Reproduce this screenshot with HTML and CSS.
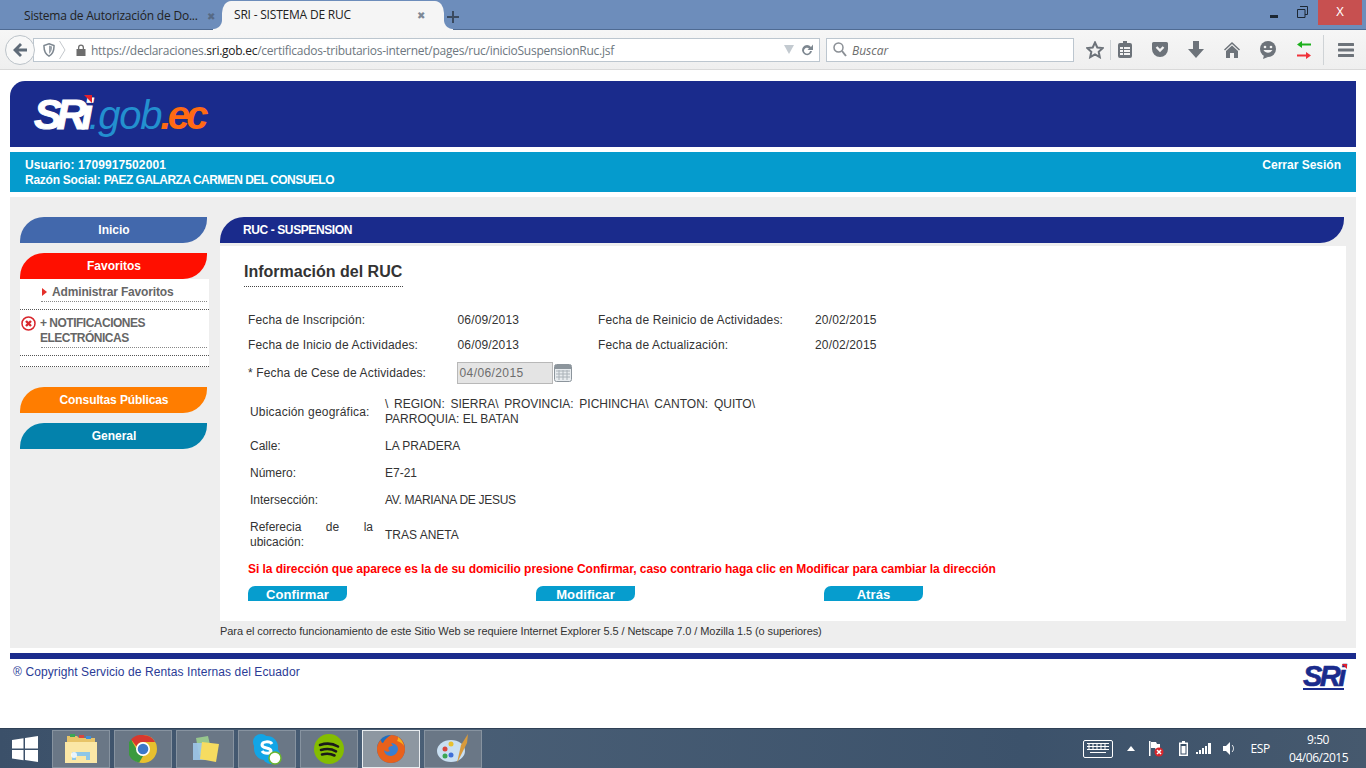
FILE: index.html
```html
<!DOCTYPE html>
<html lang="es">
<head>
<meta charset="utf-8">
<title>SRI - SISTEMA DE RUC</title>
<link rel="stylesheet" href="styles.css">
</head>
<body>
<div class="app">
  <header class="titlebar">
    <div class="tab"><span class="tab-label">Sistema de Autorización de Do...</span><span class="tab-x">✖</span></div>
    <div class="tab active"><span class="tab-label">SRI - SISTEMA DE RUC</span><span class="tab-x">✖</span></div>
    <svg class="newtab" width="12" height="12" viewBox="0 0 12 12"><path d="M5 0h2v5h5v2H7v5H5V7H0V5h5z" fill="#3a4a60"/></svg>
    <div class="winctl">
      <svg class="win-min" width="10" height="3" viewBox="0 0 10 3"><rect width="8" height="3" y="0" fill="#1c2733"/></svg>
      <svg class="win-max" width="11" height="12" viewBox="0 0 11 12"><path d="M3 .5h7.500v8H8M.5 3.500h7.500v8H.5z" fill="none" stroke="#1c2733"/></svg>
      <div class="win-close">X</div>
    </div>
  </header>
  <nav class="toolbar">
    <div class="backbtn"><svg width="16" height="16" viewBox="0 0 16 16"><path d="M8 1 1 8l7 7 2-2-3.500-3.500H15v-3H6.500L10 3z" fill="#5f6b78"/></svg></div>
    <div class="urlbar">
      <svg class="shield" width="12" height="14" viewBox="0 0 12 14"><path d="M6 .8 11 2.500c.2 5-1.500 8.800-5 10.700C2.500 11.300.8 7.500 1 2.500z" fill="none" stroke="#7d8790" stroke-width="1.500"/><path d="M6 2.500 9 3.600c.1 3.500-1 6-3 7.300z" fill="#9aa2aa"/></svg>
      <svg class="chev" width="7" height="20" viewBox="0 0 7 20"><path d="M.5 1 6 10 .5 19" fill="none" stroke="#c4c8cc"/></svg>
      <svg class="lock" width="10" height="12" viewBox="0 0 10 12"><path d="M2 5V3.500a3 3 0 0 1 6 0V5h1.500v7H.5V5zm1.300 0h3.400V3.500a1.700 1.700 0 0 0-3.400 0z" fill="#6d6d6d"/></svg>
      <span class="url">https://declaraciones.<b>sri.gob.ec</b>/certificados-tributarios-internet/pages/ruc/inicioSuspensionRuc.jsf</span>
      <svg class="drop" width="10" height="9" viewBox="0 0 10 9"><path d="M0 0h10L5 9z" fill="#c3cad0"/></svg>
      <svg class="reload" width="12" height="14" viewBox="0 0 12 14"><path d="M10 4A5 5 0 1 0 11 8H9A3 3 0 1 1 8 5.400L6.500 7H12V1.500z" fill="#7d8790"/></svg>
    </div>
    <div class="searchbar">
      <svg width="14" height="15" viewBox="0 0 14 15"><circle cx="5.500" cy="5.500" r="4.500" fill="none" stroke="#8a8f95" stroke-width="1.500"/><path d="m9 9 4 5" stroke="#8a8f95" stroke-width="2"/></svg>
      <span class="search-ph">Buscar</span>
    </div>
    <div class="tools">
      <svg class="t-star" width="18" height="18" viewBox="0 0 18 18"><path d="m9 1.500 2.300 5 5.400.6-4 3.700 1.100 5.400L9 13.500l-4.800 2.700 1.100-5.400-4-3.700 5.400-.6z" fill="none" stroke="#6d737a" stroke-width="2"/></svg>
      <i class="t-sep"></i>
      <svg class="t-clip" width="14" height="17" viewBox="0 0 14 17"><path d="M5 0h4v2h3a2 2 0 0 1 2 2v11a2 2 0 0 1-2 2H2a2 2 0 0 1-2-2V4a2 2 0 0 1 2-2h3z" fill="#6d737a"/><path d="M2 6h3v2H2zm4 0h6v2H6zm-4 3h3v2H2zm4 0h6v2H6zm-4 3h3v2H2zm4 0h6v2H6z" fill="#f4f4f4"/></svg>
      <svg class="t-pocket" width="16" height="15" viewBox="0 0 16 15"><path d="M1.500 0h13A1.500 1.500 0 0 1 16 1.500V7a8 8 0 0 1-16 0V1.500A1.500 1.500 0 0 1 1.500 0z" fill="#6d737a"/><path d="m4.500 5 3.500 3.500L11.500 5" fill="none" stroke="#f4f4f4" stroke-width="2.400"/></svg>
      <svg class="t-down" width="16" height="17" viewBox="0 0 16 17"><path d="M5 0h6v8h5l-8 9-8-9h5z" fill="#6d737a"/></svg>
      <svg class="t-home" width="16" height="16" viewBox="0 0 16 16"><path d="m8 0 8 7.500-1 1L8 2 1 8.500l-1-1z" fill="#6d737a"/><path d="M8 3.500 14 9v7h-4v-5H6v5H2V9z" fill="#6d737a"/></svg>
      <svg class="t-smile" width="18" height="18" viewBox="0 0 18 18"><circle cx="9" cy="8" r="8" fill="#6d737a"/><path d="M5 14 4 18l5-2z" fill="#6d737a"/><circle cx="6" cy="6" r="1.300" fill="#f4f4f4"/><circle cx="12" cy="6" r="1.300" fill="#f4f4f4"/><path d="M4.500 9c2 3.500 7 3.500 9 0z" fill="#f4f4f4"/></svg>
      <svg class="t-arrows" width="14" height="18" viewBox="0 0 14 18"><path d="M0 3.500 5 0v2.500h9v2H5V7z" fill="#1cb01c"/><path d="M14 14.500 9 11v2.500H0v2h9V18z" fill="#f0323a"/></svg>
      <i class="t-sep2"></i>
      <svg class="t-menu" width="16" height="14" viewBox="0 0 16 14"><path d="M1 0h14a1 1 0 0 1 0 3H1a1 1 0 0 1 0-3zm0 5.500h14a1 1 0 0 1 0 3H1a1 1 0 0 1 0-3zm0 5.500h14a1 1 0 0 1 0 3H1a1 1 0 0 1 0-3z" fill="#6d737a"/></svg>
    </div>
  </nav>

  <main class="page">
    <div class="banner">
      <div class="logo"><span class="logo-sri">SRi</span><span class="logo-gob">.gob</span><span class="logo-ec">.ec</span><i class="logo-flag"></i></div>
    </div>
    <div class="userbar">
      <div>
        <div class="user-id">Usuario: 1709917502001</div>
        <div><span class="user-key">Razón Social:</span> <span class="user-name">PAEZ GALARZA CARMEN DEL CONSUELO</span></div>
      </div>
      <div class="logout">Cerrar Sesión</div>
    </div>
    <div class="content">
      <aside class="side">
        <div class="pill pill-inicio">Inicio</div>
        <div class="pill pill-fav">Favoritos</div>
        <div class="side-panel">
          <div class="side-item"><i class="tri"></i>Administrar Favoritos</div>
          <div class="side-rule"></div>
          <div class="side-notif">
            <svg class="err" width="15" height="15" viewBox="0 0 15 15"><circle cx="7.500" cy="7.500" r="6.500" fill="#fff" stroke="#d8262c" stroke-width="1.500"/><path d="m5 5 5 5m0-5-5 5" stroke="#d8262c" stroke-width="2.400"/></svg>
            <div class="notif-text">+ NOTIFICACIONES ELECTRÓNICAS</div>
          </div>
          <div class="side-sub"></div>
          <div class="side-rule gap1"></div>
          <div class="side-rule gap2"></div>
        </div>
        <div class="pill pill-cons">Consultas Públicas</div>
        <div class="pill pill-gen">General</div>
      </aside>
      <section class="main">
        <div class="section-bar">RUC - SUSPENSION</div>
        <div class="form">
          <h1 class="form-title">Información del RUC</h1>
          <div class="dates">
            <div>Fecha de Inscripción:</div><div>06/09/2013</div><div>Fecha de Reinicio de Actividades:</div><div>20/02/2015</div>
            <div>Fecha de Inicio de Actividades:</div><div>06/09/2013</div><div>Fecha de Actualización:</div><div>20/02/2015</div>
            <div class="cese">* Fecha de Cese de Actividades:</div>
            <div class="date-field"><span class="date-input">04/06/2015</span>
              <svg width="18" height="18" viewBox="0 0 18 18"><rect x=".5" y=".5" width="17" height="17" rx="2" fill="#e8ecef" stroke="#8c959c"/><rect x="1" y="1" width="16" height="4" fill="#8c959c"/><path d="M2 7h14M2 10h14M2 13h14M5 6v10M9 6v10M13 6v10" stroke="#aab2b8"/></svg>
            </div>
          </div>
          <div class="addr">
            <div class="wide">Ubicación geográfica:</div><div class="just">\ REGION: SIERRA\ PROVINCIA: PICHINCHA\ CANTON: QUITO\ PARROQUIA: EL BATAN</div>
            <div>Calle:</div><div>LA PRADERA</div>
            <div>Número:</div><div>E7-21</div>
            <div>Intersección:</div><div class="tight">AV. MARIANA DE JESUS</div>
            <div class="just">Referecia de la ubicación:</div><div>TRAS ANETA</div>
          </div>
          <p class="warn">Si la dirección que aparece es la de su domicilio presione Confirmar, caso contrario haga clic en Modificar para cambiar la dirección</p>
          <div class="actions">
            <div class="btn">Confirmar</div><div class="btn">Modificar</div><div class="btn">Atrás</div>
          </div>
        </div>
        <p class="req">Para el correcto funcionamiento de este Sitio Web se requiere Internet Explorer 5.5 / Netscape 7.0 / Mozilla 1.5 (o superiores)</p>
      </section>
    </div>
    <footer class="foot">
      <span class="copy">® Copyright Servicio de Rentas Internas del Ecuador</span>
      <div class="foot-logo"><span class="foot-sri">SRi</span><i class="foot-flag"></i><i class="foot-tag"></i></div>
    </footer>
  </main>

  <footer class="taskbar">
    <svg class="start" width="26" height="26" viewBox="0 0 26 26"><path d="M0 4 11.500 2.200V12.500H0zM13 2 26 0v12.500H13zM0 14h11.500v10.300L0 22.500zM13 14h13v12l-13-2z" fill="#fff"/></svg>
    <div class="tasks">
      <div class="task"><svg width="34" height="32" viewBox="0 0 34 32"><path d="M3 3h10l2 2h16v22H3z" fill="#e8c468"/><rect x="6" y="1" width="5" height="3" fill="#3aa655"/><rect x="15" y="2" width="5" height="3" fill="#d8463c"/><rect x="22" y="3" width="5" height="3" fill="#3f8ed8"/><path d="M1 9h32v21H1z" fill="#fbe7a6"/><path d="M8 27v-8h18v8h-4v-4H12v4z" fill="#8fc7e8"/><circle cx="10" cy="22" r="3" fill="#fff" opacity=".8"/></svg></div>
      <div class="task"><svg width="28" height="28" viewBox="0 0 28 28"><circle cx="14" cy="14" r="14" fill="#e8c02e"/><path d="M14 0a14 14 0 0 1 12.100 7H14A7 7 0 0 0 7.500 11.400L2 4.500A14 14 0 0 1 14 0z" fill="#d8382e"/><path d="M2 4.500 7.700 14.500A7 7 0 0 0 14 21l-3.800 6.500A14 14 0 0 1 2 4.500z" fill="#3a9a3e"/><circle cx="14" cy="14" r="7" fill="#fff"/><circle cx="14" cy="14" r="5.300" fill="#3d78c8"/></svg></div>
      <div class="task"><svg width="32" height="28" viewBox="0 0 32 28"><path d="M7 3 19 1 22 14 10 20z" fill="#9cce8e" opacity=".9"/><rect x="4" y="8" width="18" height="17" fill="#9ec8ea" opacity=".9"/><path d="M13 7 30 9 27 27 11 24z" fill="#f6dc60"/></svg></div>
      <div class="task"><svg width="32" height="32" viewBox="0 0 32 32"><circle cx="10" cy="9" r="8" fill="#12a5e6"/><circle cx="20" cy="22" r="9" fill="#12a5e6"/><rect x="3" y="3" width="24" height="24" rx="11" fill="#12a5e6"/><path d="M21 11c-2-3-10-3-10 1 0 4 9 2 9 6 0 3-7 3-9 0" fill="none" stroke="#fff" stroke-width="3"/><circle cx="24" cy="25" r="6" fill="#fff" stroke="#6bb52e" stroke-width="1.500"/></svg></div>
      <div class="task"><svg width="30" height="30" viewBox="0 0 30 30"><circle cx="15" cy="15" r="15" fill="#84bd00"/><path d="M6 11c6-2 13-1.500 18 1.500M7 16c5-1.500 11-1 15 1.300M8 20.500c4-1 9-.8 12.500 1" fill="none" stroke="#1a1a1a" stroke-width="2.600" stroke-linecap="round"/></svg></div>
      <div class="task task-on"><svg width="30" height="30" viewBox="0 0 30 30"><circle cx="15" cy="15" r="14" fill="#1f6fc0"/><path d="M15 1c8 0 14 6 14 14 0 8-6 14-14 14C7 29 1 23 1 15 1 11 3 7 5 6c0 2 1 3 2 3 2-4 5-6 8-8z" fill="#e8611c"/><path d="M15 9c4 0 7 3 7 6s-3 7-7 7-7-3-7-6c2 2 4 2 6 1-2-1-2-3-1-4 1-1 3-1 4-1-1-1-1-2-2-3z" fill="#3b7fd0"/><path d="M22 3c3 2 5 5 6 9-2-3-4-4-7-5 1-1 1-3 1-4z" fill="#f6b01e"/></svg></div>
      <div class="task"><svg width="34" height="32" viewBox="0 0 34 32"><ellipse cx="15" cy="18" rx="14" ry="11" fill="#c9dff2"/><circle cx="9" cy="16" r="2.500" fill="#d8463c"/><circle cx="15" cy="11" r="2.500" fill="#e8c02e"/><circle cx="9" cy="23" r="2.500" fill="#3aa655"/><circle cx="15" cy="22" r="2.500" fill="#3f6ed8"/><path d="M32 1 25 12l-4 18 7-14 3-6z" fill="#d89a3c"/></svg></div>
    </div>
    <div class="tray">
      <svg class="kbd" width="30" height="18" viewBox="0 0 30 18"><rect x=".5" y=".5" width="29" height="17" rx="1.500" fill="none" stroke="#fff"/><path d="M4 3.500h22M4 6.500h22M4 9.500h22M7 12.500h16M6 3v7M10 3v7M14 3v7M18 3v7M22 3v7" stroke="#fff"/></svg>
      <svg class="caret" width="8" height="5" viewBox="0 0 8 5"><path d="M4 0l4 5H0z" fill="#fff"/></svg>
      <svg class="flag" width="16" height="16" viewBox="0 0 16 16"><path d="M1 0h1.500v15H1zM3 1h5l1 2h3v6H8L7 7H3z" fill="#fff"/><circle cx="11" cy="11" r="4.500" fill="#d8262c"/><path d="m9 9 4 4m0-4-4 4" stroke="#fff" stroke-width="1.500"/></svg>
      <svg class="batt" width="9" height="15" viewBox="0 0 9 15"><path d="M3 0h3v1.500h3V15H0V1.500h3z" fill="#fff"/><rect x="1.500" y="3" width="6" height="10.500" fill="#3a4f66"/><rect x="2.500" y="5" width="4" height="7.500" fill="#fff"/></svg>
      <svg class="signal" width="15" height="11" viewBox="0 0 15 11"><path d="M0 9h2v2H0zM3 7h2v4H3zM6 5h2v6H6zM9 3h2v8H9zM12 0h3v11h-3z" fill="#fff"/></svg>
      <svg class="vol" width="13" height="13" viewBox="0 0 13 13"><path d="M0 4h3l4-4v13L3 9H0z" fill="#fff"/><path d="M9 3c2 2 2 5 0 7" fill="none" stroke="#fff"/></svg>
      <span class="lang">ESP</span>
      <div class="clock"><div>9:50</div><div>04/06/2015</div></div>
    </div>
  </footer>
</div>
</body>
</html>
```
FILE: styles.css
```css
* { box-sizing: border-box; }
html, body { margin: 0; padding: 0; }
body { width: 1366px; height: 768px; overflow: hidden; background: #fff; font-family: "Liberation Sans", Arial, sans-serif; font-size: 12px; color: #333; }
.app { display: flex; flex-direction: column; height: 768px; }

/* Browser chrome */
.titlebar { height: 30px; background: #6d8dbb; border-bottom: 1px solid #4f6b93; display: flex; align-items: flex-end; position: relative; font-family: "Open Sans", sans-serif; font-size: 12px; color: #222; }
.tab { width: 222px; height: 27px; padding: 0 7px 0 24px; display: flex; align-items: center; justify-content: space-between; white-space: nowrap; letter-spacing: -.2px; }
.tab-x { color: #4d5b6e; font-size: 10px; opacity: .7; }
.tab.active { width: 222px; height: 29px; margin-bottom: -1px; padding: 0 19px 2px 12px; background: #f5f5f5; border-radius: 9px 9px 0 0 / 12px 12px 0 0; color: #222; position: relative; }
.tab.active::before, .tab.active::after { content: ""; position: absolute; bottom: 0; width: 9px; height: 10px; }
.tab.active::before { left: -9px; background: radial-gradient(circle at 0 0, transparent 8.500px, #f5f5f5 9.500px); }
.tab.active::after { right: -9px; background: radial-gradient(circle at 100% 0, transparent 8.500px, #f5f5f5 9.500px); }
.newtab { margin: 0 0 6px 3px; }
.winctl { position: absolute; top: 0; right: 4px; display: flex; align-items: flex-start; }
.win-min { margin: 15px 17px 0 0; }
.win-max { margin: 6px 10px 0 0; }
.win-close { width: 44px; height: 25px; background: #c75050; color: #fff; text-align: center; font: 12px/25px "Liberation Sans", sans-serif; }
.toolbar { height: 40px; background: linear-gradient(#f6f6f6, #efefef); border-bottom: 1px solid #d9d9d9; display: flex; align-items: center; padding-left: 5px; }
.backbtn { width: 30px; height: 30px; border: 1px solid #bcc3c9; border-radius: 50%; background: #f8f8f8; display: flex; align-items: center; justify-content: center; flex: none; margin-right: -2px; position: relative; z-index: 1; }
.urlbar { width: 787px; height: 24px; background: #fff; border: 1px solid #bcc6cf; display: flex; align-items: center; padding-left: 7px; font-family: "Open Sans", sans-serif; font-size: 12px; color: #6d7780; white-space: nowrap; letter-spacing: -.26px; }
.url { padding-top: 2px; }
.url b { color: #222; font-weight: 400; }
.shield { margin-left: 2px; flex: none; }
.chev { margin: 0 10px 0 4px; flex: none; }
.lock { margin-right: 5px; flex: none; }
.drop { margin-left: auto; margin-right: 7px; flex: none; }
.reload { margin-right: 6px; flex: none; }
.searchbar { width: 248px; height: 24px; margin-left: 6px; background: #fff; border: 1px solid #bcc6cf; display: flex; align-items: center; gap: 5px; padding-left: 6px; font-family: "Open Sans", sans-serif; font-size: 12px; font-style: italic; color: #6d6d6d; }
.search-ph { padding-top: 2px; }
.tools { display: flex; align-items: center; height: 30px; margin-left: 12px; }
.t-sep { width: 1px; height: 20px; background: #cfd3d6; margin: 0 7px 0 6px; }
.t-pocket { margin-left: 20px; }
.t-down { margin-left: 20px; }
.t-home { margin-left: 20px; }
.t-smile { margin-left: 19px; }
.t-arrows { margin-left: 20px; }
.t-sep2 { width: 1px; height: 30px; background: #cfd3d6; margin: 0 14px 0 12px; }

/* Page */
.page { flex: 1; padding: 11px 10px 0; background: #fff; }
.banner { height: 66px; background: #1a2b8c; border-radius: 15px 0 0 0; padding: 14px 0 0 24px; }
.logo { display: flex; align-items: baseline; height: 40px; font: italic 700 40px/40px "Liberation Sans", sans-serif; position: relative; width: 175px; }
.logo-sri { color: #fff; font-size: 42px; letter-spacing: -5.500px; -webkit-text-stroke: 1px #fff; }
.logo-gob { color: #2390cf; font-weight: 400; letter-spacing: -1.300px; font-size: 40px; margin-left: 1px; }
.logo-ec { color: #ff6a13; letter-spacing: -3.600px; margin-left: -1px; }
.logo-flag { position: absolute; left: 50px; top: 0; width: 0; height: 0; border-top: 8px solid #e4202c; border-left: 8px solid transparent; }
.userbar { height: 40px; margin-top: 5px; background: #059bcd; color: #fff; font-weight: 700; display: flex; justify-content: space-between; padding: 6px 15px; line-height: 15px; }
.user-id { letter-spacing: .1px; }
.user-key { letter-spacing: -.25px; }
.user-name { letter-spacing: -.53px; }
.content { margin-top: 5px; height: 451px; background: #eee; padding: 20px 10px 0; display: flex; }
.side { width: 189px; flex: none; margin-right: 11px; }
.pill { width: 187px; height: 26px; padding-left: 1px; border-radius: 24px 0 24px 0; text-align: center; color: #fff; font-weight: 700; line-height: 26px; margin-bottom: 10px; }
.pill-inicio { background: #4268ac; }
.pill-fav { background: #ff0f00; margin-bottom: 0; }
.pill-cons { background: #ff7d00; letter-spacing: -.1px; }
.pill-gen { background: #0382ac; }
.side-panel { background: #fff; height: 88px; margin-bottom: 20px; color: #666; font-weight: 700; }
.side-item { height: 23px; margin-left: 21px; width: 166px; border-bottom: 1px dotted #888; padding-top: 3px; line-height: 20px; display: flex; align-items: center; letter-spacing: -.15px; }
.tri { width: 0; height: 0; border-left: 5px solid #e4302a; border-top: 4px solid transparent; border-bottom: 4px solid transparent; margin: 0 5px 0 1px; }
.side-rule { height: 8px; border-bottom: 1px dotted #555; }
.side-notif { display: flex; height: 37px; padding-top: 6px; }
.err { margin: 0 4px 0 1px; flex: none; }
.notif-text { line-height: 15px; width: 130px; letter-spacing: -.5px; }
.side-sub { margin: 0 2px 0 21px; border-top: 1px dotted #888; }
.gap1 { height: 8px; }
.gap2 { height: 11px; }
.main { width: 1126px; flex: none; }
.section-bar { width: 1124px; height: 26px; background: #1a2b8c; color: #fff; font-weight: 700; line-height: 26px; padding-left: 23px; border-radius: 24px 0 24px 0; letter-spacing: -.4px; }
.form { margin-top: 3px; height: 375px; background: #fff; padding: 16px 0 0 24px; }
.form-title { display: inline-block; margin: 0; width: 159px; height: 25px; border-bottom: 1px dotted #444; font-size: 16px; font-weight: 700; line-height: 20px; color: #333; white-space: nowrap; vertical-align: top; }
.dates { display: grid; grid-template-columns: 209.500px 140.500px 217px auto; grid-auto-rows: 25px; margin: 21px 0 0 4px; line-height: 25px; letter-spacing: .15px; }
.cese { line-height: 30px; }
.date-field { display: flex; align-items: center; gap: 1px; height: 29px; padding-top: 0; grid-column: 2 / 4; margin-left: -1px; }
.date-input { width: 96px; height: 22px; background: #e4e4e4; border: 1px solid #b8b8b8; color: #6d6d6d; line-height: 20px; padding-left: 2px; letter-spacing: .4px; }
.addr { display: grid; grid-template-columns: 123px 370px; column-gap: 12px; row-gap: 12px; margin: 14px 0 0 6px; line-height: 15px; align-items: center; }
.wide { letter-spacing: .2px; white-space: nowrap; }
.tight { letter-spacing: -.3px; }
.just { text-align: justify; }
.warn { margin: 12px 0 0 4px; color: #f00; font-weight: 700; line-height: 15px; letter-spacing: -.053px; }
.actions { display: flex; gap: 189px; margin: 9px 0 0 4px; }
.btn { width: 99px; height: 15px; background: #069dce; color: #fff; font-size: 13px; font-weight: 700; text-align: center; line-height: 17px; border-radius: 7px 0 7px 0; letter-spacing: .1px; }
.req { margin: 4px 0 0; font-size: 11px; line-height: 12px; color: #333; letter-spacing: -.08px; }
.foot { margin-top: 5px; border-top: 6px solid #1a2b8c; display: flex; justify-content: space-between; padding: 5px 9px 0 3px; color: #2a3b96; line-height: 15px; }
.copy { padding-top: 1px; letter-spacing: .1px; }
.foot-logo { position: relative; width: 44px; height: 26px; margin-top: 0; }
.foot-sri { font: italic 700 29px/24px "Liberation Sans", sans-serif; color: #1a2b8c; letter-spacing: -2.500px; -webkit-text-stroke: .6px #1a2b8c; }
.foot-flag { position: absolute; right: 0; top: 0; border-top: 5px solid #e4202c; border-left: 5px solid transparent; }
.foot-tag { position: absolute; left: 0; bottom: 0; width: 41px; height: 2px; background: #1a2b8c; }

/* Taskbar */
.taskbar { height: 40px; flex: none; background: linear-gradient(90deg, #3b5069, #4a5f76 30%, #3c526b 75%, #46596e); border-top: 1px solid #2f4156; display: flex; align-items: center; padding-left: 12px; font-family: "Open Sans", sans-serif; color: #fff; font-size: 12px; }
.start { flex: none; margin-right: 14px; }
.tasks { display: flex; gap: 4px; }
.task { width: 58px; height: 38px; background: #6a7786; border: 1px solid #8793a0; display: flex; align-items: center; justify-content: center; }
.task-on { background: #8d97a1; border: 1px solid #e8ecef; }
.tray { display: flex; align-items: center; margin-left: auto; padding-right: 19px; }
.caret { margin: 0 13px 0 14px; }
.flag { margin-right: 15px; }
.batt { margin-right: 8px; }
.signal { margin-right: 12px; }
.lang { margin: 0 19px 0 14px; letter-spacing: -.3px; }
.clock { text-align: center; line-height: 18px; width: 58px; letter-spacing: -.45px; }
```
